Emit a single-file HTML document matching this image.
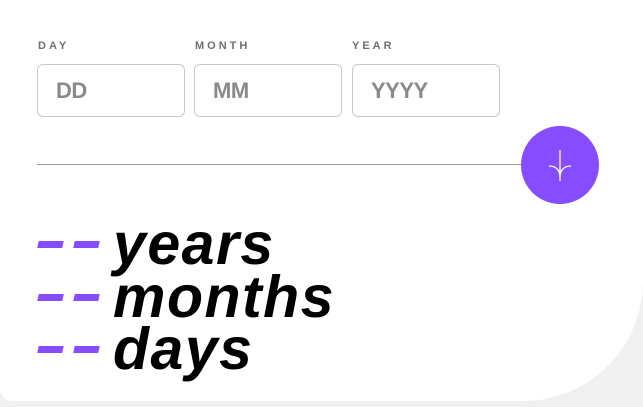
<!DOCTYPE html>
<html><head><style>
html,body{margin:0;padding:0;width:643px;height:407px;background:#f0f0f0;overflow:hidden;font-family:"Liberation Sans",sans-serif}
.card{position:absolute;left:0;top:-50px;width:643px;height:451px;background:#fff;border-radius:0 0 120px 12px}
.lbl{position:absolute;top:40px;font-size:11px;font-weight:bold;letter-spacing:3px;color:#716f6f}
.in{position:absolute;top:64px;width:148px;height:53px;border:1px solid #c8c8c8;border-radius:6px;box-sizing:border-box}
.in span{position:absolute;left:18px;top:13px;font-size:22px;font-weight:bold;color:#8a8a8a;letter-spacing:-0.5px}
.line{position:absolute;left:37px;top:164px;width:490px;height:1px;background:#999}
.btn{position:absolute;left:521px;top:126px;width:78px;height:78px;border-radius:50%;background:#854dff}
.row{position:absolute;left:38px;font-size:59px;font-weight:bold;font-style:italic;letter-spacing:1.5px;color:#000;line-height:1}
.d{display:inline-block;width:25px;height:7px;background:#854dff;margin-right:11px;transform:skewX(-12deg);vertical-align:middle;position:relative;top:-4px}
.d+.d{margin-right:14px}
</style></head><body>
<div class="card"></div>
<div class="lbl" style="left:38px">DAY</div>
<div class="lbl" style="left:195px">MONTH</div>
<div class="lbl" style="left:352px">YEAR</div>
<div class="in" style="left:37px"><span>DD</span></div>
<div class="in" style="left:194px"><span>MM</span></div>
<div class="in" style="left:352px"><span>YYYY</span></div>
<div class="line"></div>
<div class="btn"><svg width="78" height="78" viewBox="0 0 78 78"><path d="M39 24V55M28 40C35 40 39 44 39 52M50 40C43 40 39 44 39 52" stroke="#fff" stroke-width="1.3" fill="none"/></svg></div>
<div class="row" style="top:215px"><span class="d"></span><span class="d"></span>years</div>
<div class="row" style="top:268px"><span class="d"></span><span class="d"></span>months</div>
<div class="row" style="top:320px"><span class="d"></span><span class="d"></span>days</div>
</body></html>
